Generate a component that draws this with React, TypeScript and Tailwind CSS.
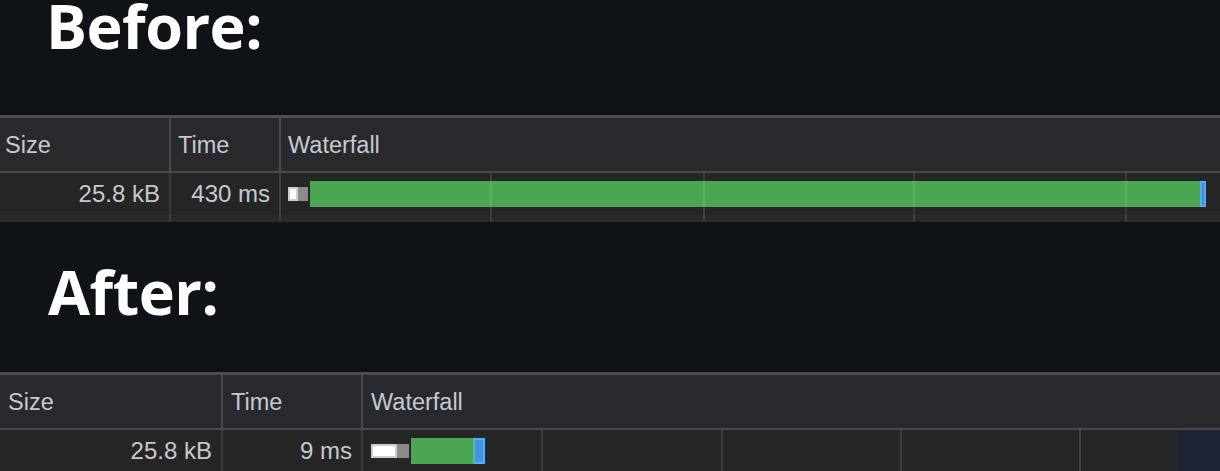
import React from "react";

type TableProps = {
  sizeW: string;
  timeW: string;
  sizePl: string;
  cellPl: string;
  waterPl: string;
  sizeVal: string;
  timeVal: string;
  grid: number[];
  bar: React.ReactNode;
  highlight?: boolean;
};

const headerDivider = <div className="w-[2px] self-stretch bg-[#48494d]" />;
const rowDivider = <div className="w-[2px] self-stretch bg-[#3d3d3f]" />;

function BodyCell({ className, children }: { className: string; children?: React.ReactNode }) {
  return (
    <div className={`flex flex-col ${className}`}>
      <div className="flex h-[42px] items-center justify-end bg-[#262626] pr-[9px] text-[24px]">{children}</div>
      <div className="flex-1 bg-[#2a2a2b]" />
    </div>
  );
}

function Table(p: TableProps) {
  return (
    <div className="border-t-[3px] border-[#4b4c50] text-[23.5px] text-[#c6c9cf]" style={{ fontFamily: '"Liberation Sans", Arial, sans-serif' }}>
      <div className="flex h-[55px] border-b-2 border-[#48494d] bg-[#292a2e]">
        <div className={`flex items-center pt-[2px] ${p.sizeW} ${p.sizePl}`}>Size</div>
        {headerDivider}
        <div className={`flex items-center pt-[2px] ${p.timeW} ${p.cellPl}`}>Time</div>
        {headerDivider}
        <div className={`flex flex-1 items-center pt-[2px] ${p.waterPl}`}>Waterfall</div>
      </div>
      <div className="flex h-[49px]">
        <BodyCell className={p.sizeW}>
          <span>{p.sizeVal}</span>
        </BodyCell>
        {rowDivider}
        <BodyCell className={p.timeW}>
          <span>{p.timeVal}</span>
        </BodyCell>
        {rowDivider}
        <div className="relative flex flex-1 flex-col">
          <div className={`flex h-[42px] items-center bg-[#262626] ${p.waterPl}`}>{p.bar}</div>
          <div className="flex-1 bg-[#2a2a2b]" />
          {p.highlight && <div className="absolute right-0 top-0 h-[42px] w-[42px] bg-[#1b2335]" />}
          {p.grid.map((g) => (
            <div key={g} className="absolute inset-y-0 w-[2px] bg-white/10" style={{ left: g }} />
          ))}
        </div>
      </div>
    </div>
  );
}

function Bar1() {
  return (
    <div className="flex items-center">
      <div className="flex h-[14px] items-stretch">
        <div className="w-[10px] border-2 border-[#cfcfcf] bg-white" />
        <div className="w-[10px] bg-[#8b8b8b]" />
      </div>
      <div className="ml-[2px] h-[26px] w-[890px] bg-[#4ba652]" />
      <div className="h-[26px] w-[6px] border-2 border-[#55adf5] bg-[#3f8fd6]" />
    </div>
  );
}

function Bar2() {
  return (
    <div className="flex items-center">
      <div className="flex h-[14px] items-stretch">
        <div className="w-[26px] border-2 border-[#cdcdcd] bg-white" />
        <div className="w-[12px] bg-[#8b8b8b]" />
      </div>
      <div className="ml-[2px] h-[26px] w-[62px] bg-[#4ba652]" />
      <div className="h-[26px] w-[12px] border-2 border-[#55adf5] bg-[#4195dc]" />
    </div>
  );
}

export default function App() {
  return (
    <div className="h-[471px] w-[1220px] overflow-hidden bg-[#0f1216]">
      <div className="h-[115px] pl-[46px]">
        <div className="text-[61px] font-bold leading-[52px] text-white" style={{ fontFamily: '"Open Sans", sans-serif', letterSpacing: "-0.5px" }}>
          Before:
        </div>
      </div>
      <Table
        sizeW="w-[169px]"
        timeW="w-[108px]"
        sizePl="pl-[5px]"
        cellPl="pl-[7px]"
        waterPl="pl-[7px]"
        sizeVal="25.8 kB"
        timeVal="430 ms"
        grid={[209, 422, 632, 844]}
        bar={<Bar1 />}
      />
      <div className="h-[150px] pl-[48px] pt-[44px]">
        <div className="text-[61px] font-bold leading-[52px] text-white" style={{ fontFamily: '"Open Sans", sans-serif', letterSpacing: "-0.5px" }}>
          After:
        </div>
      </div>
      <Table
        sizeW="w-[221px]"
        timeW="w-[138px]"
        sizePl="pl-[8px]"
        cellPl="pl-[8px]"
        waterPl="pl-[8px]"
        sizeVal="25.8 kB"
        timeVal="9 ms"
        grid={[178, 358, 537, 716]}
        bar={<Bar2 />}
        highlight
      />
    </div>
  );
}
